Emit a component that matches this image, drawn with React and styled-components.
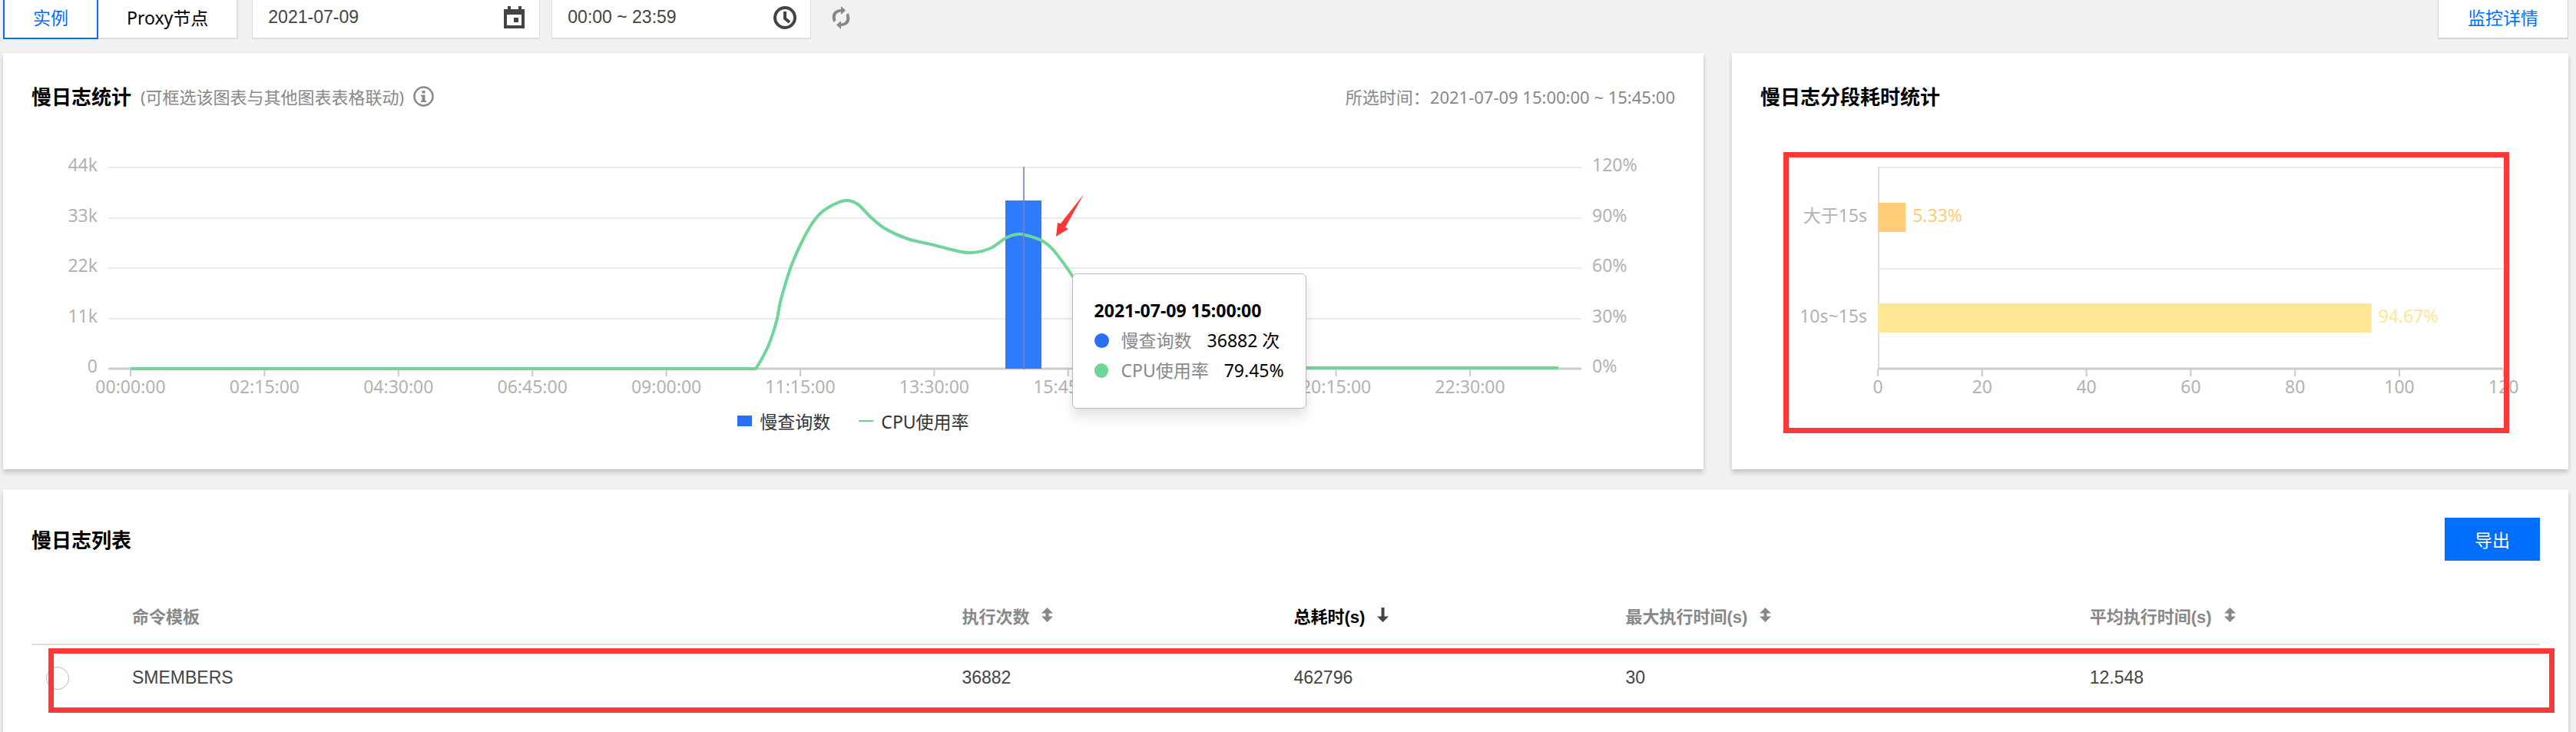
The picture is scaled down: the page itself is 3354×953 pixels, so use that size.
import React, {useState} from 'react';

import styled, {createGlobalStyle} from 'styled-components';

const blue = '#006eff';
const green = '#6fd598';
const bar = '#2f7bff';
const red = '#fc3838';
const ink = '#444';
const gray = '#888';
const axisGray = '#b2b2b2';

const ui = '"Noto Sans", "Noto Sans CJK SC", sans-serif';
const arial = '"Liberation Sans", "Noto Sans CJK SC", sans-serif';

const GlobalStyle = createGlobalStyle`
  * {
    box-sizing: border-box;
  }
  body {
    margin: 0;
    background-color: #f1f1f1;
    font-family: ${ui};
    font-size: 23px;
    color: #000;
  }
  button, input {
    font: inherit;
    color: inherit;
    margin: 0;
  }
`;

const Page = styled.div`
  display: flex;
  flex-direction: column;
  min-height: 100vh;
  padding: 0 10px 0 4px;
  overflow: hidden;
`;

// Pulled up a little, the bar is partly scrolled out of view
const Toolbar = styled.header`
  display: flex;
  align-items: center;
  height: 56px;
  margin: -5px 0 18px;
`;

const Tabs = styled.div`
  display: flex;
  height: 100%;
  margin-right: 18px;
`;

const Tab = styled.button`
  height: 100%;
  padding: 0 37px 2px;
  background-color: #fff;
  border: 2px solid ${props => props.$active ? blue : '#ddd'};
  border-left-width: ${props => props.$active ? '2px' : '0'};
  color: ${props => props.$active ? blue : '#000'};
`;

const Picker = styled.label`
  display: flex;
  align-items: center;
  width: ${props => props.$wide ? '375px' : '338px'};
  height: 100%;
  margin-right: 15px;
  padding: 0 18px 0 20px;
  background-color: #fff;
  border: 1px solid #ddd;
  border-bottom-width: 2px;
  color: ${ink};
  font-family: ${arial};
`;

const PickerInput = styled.input`
  flex: 1;
  min-width: 0;
  padding: 0;
  border: 0;
  outline: 0;
  background: none;
`;

const IconButton = styled.button`
  display: flex;
  margin-left: 12px;
  padding: 0;
  border: 0;
  background: none;
`;

const DetailLink = styled.a`
  display: flex;
  align-items: center;
  height: 100%;
  margin-left: auto;
  padding: 0 38px 2px;
  background-color: #fff;
  border: 1px solid #cfd5de;
  border-bottom-width: 2px;
  color: ${blue};
  text-decoration: none;
`;

const Charts = styled.div`
  display: grid;
  grid-template-columns: 2214fr 1089fr;
  gap: 37px;
  margin-bottom: 26px;
`;

const Card = styled.section`
  flex: ${props => props.$fill ? '1' : 'none'};
  padding: 37px 37px 27px;
  background-color: #fff;
  box-shadow: 0 4px 6px rgba(0, 0, 0, 0.2);
`;

const CardHead = styled.div`
  display: flex;
  align-items: center;
  height: ${props => props.$tall ? '56px' : '38px'};
  margin-bottom: ${props => props.$tall ? '33px' : '4px'};
  color: ${gray};
  font-size: 22px;
`;

const Title = styled.h2`
  margin: 0 12px 0 0;
  font-size: 26px;
  color: #000;
`;

const Hint = styled.span`
  margin-right: 12px;
`;

const Range = styled.span`
  margin-left: auto;
`;

const ChartBox = styled.div`
  position: relative;
`;

const Plot = styled.svg`
  display: block;
  width: 100%;
  height: auto;
  font-size: 23px;
  fill: ${axisGray};
`;

const Legend = styled.div`
  display: flex;
  justify-content: center;
  gap: 37px;
  height: 50px;
  color: #333;
`;

const LegendItem = styled.span`
  display: flex;
  align-items: center;
  gap: 10px;
  height: 28px;
`;

const Swatch = styled.i`
  width: 19px;
  height: ${props => props.$line ? '2px' : '14px'};
  background-color: ${props => props.$line ? green : '#2b6ff5'};
`;

const Tooltip = styled.div`
  position: absolute;
  left: 63.3%;
  top: 208px;
  width: 305px;
  padding: 28px 28px 29px;
  background-color: #fff;
  border: 1px solid #bbb;
  border-radius: 6px;
  box-shadow: 0 10px 16px rgba(0, 0, 0, 0.12);
  line-height: 39px;
  white-space: nowrap;
`;

const TipTitle = styled.div`
  font-weight: bold;
`;

const TipRow = styled.div`
  display: flex;
  align-items: center;
`;

const Dot = styled.i`
  width: 19px;
  height: 19px;
  margin-right: 16px;
  border-radius: 50%;
  background-color: ${props => props.$color};
`;

const TipLabel = styled.span`
  margin-right: 20px;
  color: ${gray};
`;

const ExportButton = styled.button`
  width: 124px;
  height: 56px;
  margin-left: auto;
  border: 0;
  background-color: ${blue};
  color: #fff;
  font-size: 23px;
`;

const TableBox = styled.div`
  position: relative;
`;

const Table = styled.table`
  width: 100%;
  table-layout: fixed;
  border-collapse: collapse;
  font-family: ${arial};
  text-align: left;
`;

const Th = styled.th`
  width: ${props => props.$width};
  height: 76px;
  padding: 0 19px;
  border-bottom: 2px solid #ddd;
  color: ${props => props.$sorted ? '#000' : gray};
  font-size: 22px;
`;

const Td = styled.td`
  height: 86px;
  padding: 0 19px;
  color: ${ink};
`;

const SortButton = styled.button`
  display: flex;
  align-items: center;
  gap: 16px;
  padding: 0;
  border: 0;
  background: none;
`;

const Radio = styled.input`
  display: block;
  appearance: none;
  width: 30px;
  height: 30px;
  border: 1px solid #bbb;
  border-radius: 50%;
  background-color: #fff;
`;

// Marks the row over the table, sticks out of the right edge
const RowMark = styled.div`
  position: absolute;
  top: 81px;
  left: 22px;
  right: -19px;
  height: 84px;
  border: 7px solid ${red};
  pointer-events: none;
`;

const CalendarIcon = () => (
  <svg width="28" height="30" viewBox="0 0 28 30" fill={ink}>
    <path fillRule="evenodd" d="M5 0h4v4h10V0h4v4h4v25H0V4h5zM4 11v14h19V11z" />
    <path d="M13 15h6v6h-6z" />
  </svg>
);

const ClockIcon = () => (
  <svg width="30" height="30" viewBox="0 0 30 30" fill="none" stroke={ink} strokeWidth="4">
    <circle cx="15" cy="15" r="13" />
    <path d="M15 7v9l6 5" />
  </svg>
);

const RefreshIcon = () => (
  <svg width="24" height="30" viewBox="0 0 24 30" fill={gray}>
    <path d="M12 0l6 5.5-6 5.500V7.500C5.500 8 3.500 13 5.500 18.500L2.500 21C-1.500 13 1 4.500 12 4z" />
    <path d="M12 30l-6-5.500 6-5.500v3.500c6.500-.5 8.500-5.500 6.500-11L21.500 9c4 8 1.500 16.500-9.500 17z" />
  </svg>
);

const InfoIcon = () => (
  <svg width="27" height="27" viewBox="0 0 27 27" fill={gray}>
    <circle cx="13.500" cy="13.500" r="12" fill="none" stroke={gray} strokeWidth="2.500" />
    <path d="M11.500 6h4v3.500h-4zM10 11.500h5.500V19H17v2h-7v-2h1.500v-5.500H10z" />
  </svg>
);

const SortIcon = () => (
  <svg width="15" height="19" viewBox="0 0 15 19" fill={gray}>
    <path d="M7.500 0l7.500 7.500H9.500v4H15L7.500 19 0 11.500h5.500v-4H0z" />
  </svg>
);

const SortDownIcon = () => (
  <svg width="15" height="19" viewBox="0 0 15 19" fill={ink}>
    <path d="M5.500 0h4v11.500H15L7.500 19 0 11.500h5.500z" />
  </svg>
);

// No label at 18:00, the tooltip covers it
const times = [
  '00:00:00', '02:15:00', '04:30:00', '06:45:00', '09:00:00', '11:15:00',
  '13:30:00', '15:45:00', null, '20:15:00', '22:30:00',
];
const levels = [
  ['44k', '120%'], ['33k', '90%'], ['22k', '60%'], ['11k', '30%'], ['0', '0%'],
];
const tickX = i => 129 + i * 174.4;
const levelY = i => Math.round(70 + i * 65.5);

// CPU usage between 10:30 and 18:00, it is flat on both sides of it
const cpu = [
  [943, 332], [951, 319], [959, 303], [966, 284], [971, 266], [975, 245], [983, 217],
  [990, 196], [1001, 171], [1015, 145], [1028, 129], [1045, 118], [1061, 113], [1076, 118],
  [1093, 135], [1112, 150], [1141, 163], [1175, 171], [1198, 177], [1222, 181], [1247, 176],
  [1270, 161], [1284, 157], [1294, 158], [1315, 165], [1329, 176], [1349, 202],
  [1365, 227], [1400, 290], [1440, 331],
];

// Catmull-Rom through the points, written as cubic beziers
const smooth = pts => pts.slice(1).reduce((d, p, i) => {
  const before = pts[Math.max(i - 1, 0)];
  const from = pts[i];
  const after = pts[Math.min(i + 2, pts.length - 1)];
  const c1 = [from[0] + (p[0] - before[0]) / 6, from[1] + (p[1] - before[1]) / 6];
  const c2 = [p[0] - (after[0] - from[0]) / 6, p[1] - (after[1] - from[1]) / 6];
  return `${d} C${c1} ${c2} ${p}`;
}, `L${pts[0]}`);

const SlowLogChart = () => (
  <Plot viewBox="0 0 2140 386" role="img" aria-label="慢日志统计">
    {levels.map(([count, percent], i) => (
      <g key={count}>
        <path
          d={`M100 ${levelY(i)}H2018`}
          stroke={i === 4 ? '#ccc' : '#ebebeb'}
          strokeWidth={i === 4 ? 3 : 2}
        />
        <text x="86" y={levelY(i) + 5} textAnchor="end">{count}</text>
        <text x="2032" y={levelY(i) + 5}>{percent}</text>
      </g>
    ))}
    {times.map((time, i) => (
      <g key={i}>
        <path d={`M${tickX(i)} 333v9`} stroke="#ccc" strokeWidth="2" />
        {time && <text x={tickX(i)} y="364" textAnchor="middle">{time}</text>}
      </g>
    ))}
    <rect x="1268" y="113" width="47" height="219" fill={bar} />
    <path d={`M129 332 ${smooth(cpu)} H1988`} fill="none" stroke={green} strokeWidth="4" />
    <path d="M1292 69V333" stroke="#6f86b8" strokeOpacity="0.800" strokeWidth="2" />
    <path d="M1334 160L1336 142L1340 143L1370 105L1346 148L1350 150z" fill={red} />
  </Plot>
);

const segments = [
  {name: '大于15s', value: 5.33, color: '#ffcd78', y: 116},
  {name: '10s~15s', value: 94.67, color: '#ffe693', y: 247},
];
const costX = value => 153 + value * 6.79;

const CostChart = () => (
  <Plot viewBox="0 0 1015 426" role="img" aria-label="慢日志分段耗时统计">
    <path d="M154 70H967M154 202H967" stroke="#ebebeb" strokeWidth="2" />
    <path d="M154 69V332" stroke="#ddd" strokeWidth="2" />
    <path d="M153 332H967" stroke="#ccc" strokeWidth="3" />
    {[0, 20, 40, 60, 80, 100, 120].map(n => (
      <g key={n}>
        <path d={`M${costX(n)} 333v9`} stroke="#ccc" strokeWidth="2" />
        <text x={costX(n)} y="364" textAnchor="middle">{n}</text>
      </g>
    ))}
    {segments.map(({name, value, color, y}) => (
      <g key={name}>
        <rect x="153" y={y} width={value * 6.79} height="38" fill={color} />
        <text x="139" y={y + 25} textAnchor="end">{name}</text>
        <text x={costX(value) + 9} y={y + 25} fill={color}>{value}%</text>
      </g>
    ))}
    <rect x="33.500" y="53.500" width="938" height="359" fill="none" stroke={red} strokeWidth="7" />
  </Plot>
);

const columns = [
  {key: 'cmd', label: '命令模板', width: '33.08%'},
  {key: 'count', label: '执行次数', width: '13.23%', sortable: true},
  {key: 'total', label: '总耗时(s)', width: '13.23%', sortable: true},
  {key: 'max', label: '最大执行时间(s)', width: '18.5%', sortable: true},
  {key: 'avg', label: '平均执行时间(s)', sortable: true},
];
const rows = [
  {cmd: 'SMEMBERS', count: '36882', total: '462796', max: '30', avg: '12.548'},
];

export default () => {
  const [tab, setTab] = useState('实例');
  const [sort, setSort] = useState('total');

  return (
    <>
      <GlobalStyle />
      <Page>
        <Toolbar>
          <Tabs>
            {['实例', 'Proxy节点'].map(name => (
              <Tab key={name} $active={tab === name} onClick={() => setTab(name)}>{name}</Tab>
            ))}
          </Tabs>
          <Picker $wide>
            <PickerInput aria-label="日期" defaultValue="2021-07-09" />
            <CalendarIcon />
          </Picker>
          <Picker>
            <PickerInput aria-label="时间" defaultValue="00:00 ~ 23:59" />
            <ClockIcon />
          </Picker>
          <IconButton aria-label="刷新"><RefreshIcon /></IconButton>
          <DetailLink href="#monitor">监控详情</DetailLink>
        </Toolbar>

        <Charts>
          <Card>
            <CardHead>
              <Title>慢日志统计</Title>
              <Hint>(可框选该图表与其他图表表格联动)</Hint>
              <InfoIcon />
              <Range>所选时间：2021-07-09 15:00:00 ~ 15:45:00</Range>
            </CardHead>
            <ChartBox>
              <SlowLogChart />
              <Tooltip>
                <TipTitle>2021-07-09 15:00:00</TipTitle>
                <TipRow><Dot $color="#2b6ff5" /><TipLabel>慢查询数</TipLabel>36882 次</TipRow>
                <TipRow><Dot $color={green} /><TipLabel>CPU使用率</TipLabel>79.45%</TipRow>
              </Tooltip>
            </ChartBox>
            <Legend>
              <LegendItem><Swatch />慢查询数</LegendItem>
              <LegendItem><Swatch $line />CPU使用率</LegendItem>
            </Legend>
          </Card>
          <Card>
            <CardHead>
              <Title>慢日志分段耗时统计</Title>
            </CardHead>
            <CostChart />
          </Card>
        </Charts>

        <Card $fill>
          <CardHead $tall>
            <Title>慢日志列表</Title>
            <ExportButton>导出</ExportButton>
          </CardHead>
          <TableBox>
            <Table>
              <thead>
                <tr>
                  <Th $width="112px" />
                  {columns.map(({key, label, width, sortable}) => (
                    <Th key={key} $width={width} $sorted={sort === key}>
                      {sortable ? (
                        <SortButton onClick={() => setSort(key)}>
                          {label}
                          {sort === key ? <SortDownIcon /> : <SortIcon />}
                        </SortButton>
                      ) : label}
                    </Th>
                  ))}
                </tr>
              </thead>
              <tbody>
                {rows.map(row => (
                  <tr key={row.cmd}>
                    <Td><Radio type="radio" name="row" aria-label={row.cmd} /></Td>
                    {columns.map(({key}) => <Td key={key}>{row[key]}</Td>)}
                  </tr>
                ))}
              </tbody>
            </Table>
            <RowMark />
          </TableBox>
        </Card>
      </Page>
    </>
  );
};
